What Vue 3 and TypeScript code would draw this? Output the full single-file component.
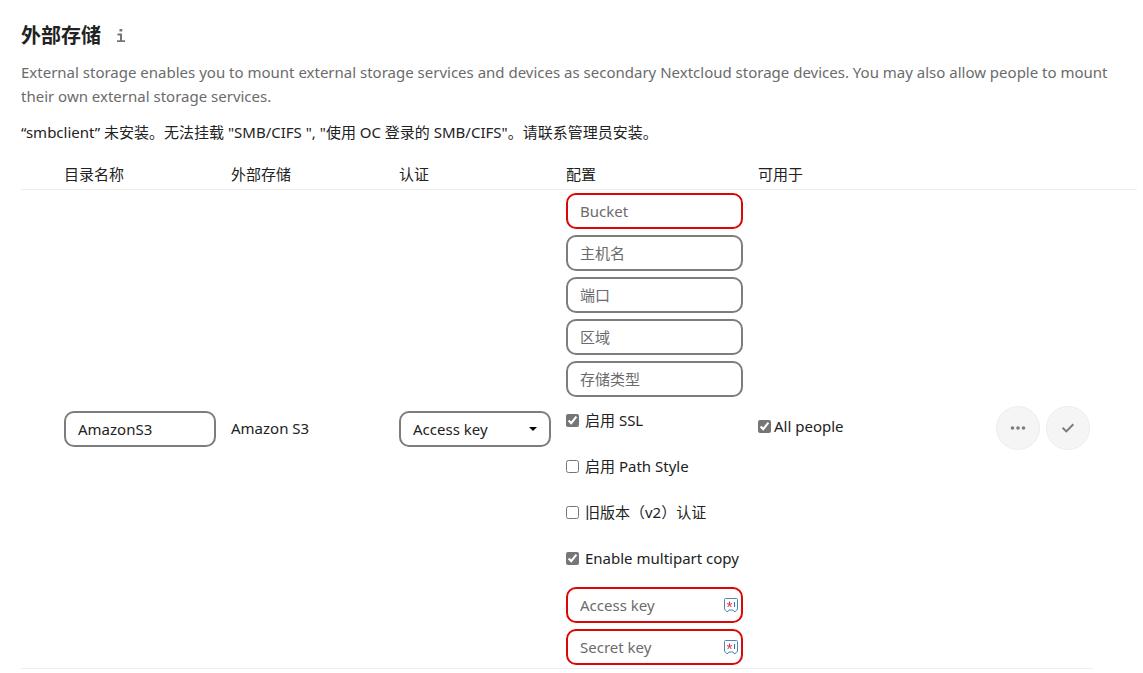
<script setup lang="ts">
import { reactive, ref } from 'vue'

interface Field {
  id: string
  label: string
  required?: boolean
}

interface Option {
  id: string
  label: string
  checked: boolean
}

const headings: string[] = ['目录名称', '外部存储', '认证', '配置', '可用于']

const textFields: Field[] = [
  { id: 'bucket', label: 'Bucket', required: true },
  { id: 'hostname', label: '主机名' },
  { id: 'port', label: '端口' },
  { id: 'region', label: '区域' },
  { id: 'storage-class', label: '存储类型' },
]

const options = reactive<Option[]>([
  { id: 'use-ssl', label: '启用 SSL', checked: true },
  { id: 'path-style', label: '启用 Path Style', checked: false },
  { id: 'legacy-auth', label: '旧版本（v2）认证', checked: false },
  { id: 'multipart', label: 'Enable multipart copy', checked: true },
])

const keyFields: Field[] = [
  { id: 'access-key', label: 'Access key' },
  { id: 'secret-key', label: 'Secret key' },
]

const folderName = ref('AmazonS3')
const authMethod = ref('Access key')
const allPeople = ref(true)
const values = reactive<Record<string, string>>({})
</script>

<template>
  <main class="section">
    <header class="title">
      <h2>外部存储</h2>
      <a href="#" class="info" aria-label="Info">
        <svg viewBox="0 0 16 16" width="16" height="16" aria-hidden="true">
          <path d="M6.500 1h2.800v2.600H6.500zM4.500 5.600h4.500v6.600h3V14H4v-1.800h3V7.400H4.500z" />
        </svg>
      </a>
    </header>
    <p class="hint">
      External storage enables you to mount external storage services and devices as secondary Nextcloud storage
      devices. You may also allow people to mount their own external storage services.
    </p>
    <p class="warning">“smbclient” 未安装。无法挂载 "SMB/CIFS ", "使用 OC 登录的 SMB/CIFS"。请联系管理员安装。</p>

    <table class="storages">
      <colgroup>
        <col class="c-status" />
        <col class="c-name" />
        <col class="c-backend" />
        <col class="c-auth" />
        <col class="c-config" />
        <col />
        <col class="c-actions" />
        <col class="c-end" />
      </colgroup>
      <thead>
        <tr>
          <th></th>
          <th v-for="h in headings" :key="h" scope="col">{{ h }}</th>
          <th></th>
          <th></th>
        </tr>
      </thead>
      <tbody>
        <tr>
          <td></td>
          <td>
            <input v-model="folderName" class="field" type="text" aria-label="目录名称" />
          </td>
          <td class="backend">Amazon S3</td>
          <td>
            <div class="select">
              <select v-model="authMethod" class="field" aria-label="认证">
                <option>Access key</option>
              </select>
              <svg class="caret" viewBox="0 0 8 4" width="8" height="4" aria-hidden="true">
                <path d="M0 0h8L4 4z" />
              </svg>
            </div>
          </td>
          <td>
            <div class="config">
              <input
                v-for="f in textFields"
                :key="f.id"
                v-model="values[f.id]"
                class="field"
                :class="{ invalid: f.required }"
                type="text"
                :placeholder="f.label"
                :aria-label="f.label"
              />
              <div class="options">
                <label v-for="o in options" :key="o.id" class="option" :for="o.id">
                  <input :id="o.id" v-model="o.checked" type="checkbox" />
                  <span>{{ o.label }}</span>
                </label>
              </div>
              <div v-for="f in keyFields" :key="f.id" class="key">
                <input
                  v-model="values[f.id]"
                  class="field invalid"
                  type="text"
                  :placeholder="f.label"
                  :aria-label="f.label"
                />
                <svg class="vault" viewBox="0 0 14 14" width="14" height="14" aria-hidden="true">
                  <path
                    class="safe"
                    d="M1.500.5h11a1 1 0 0 1 1 1v9.500a1 1 0 0 1-1 1l-1 1.500h-1.500l-1-1.500h-4l-1 1.500h-1.500l-1-1.500a1 1 0 0 1-1-1v-9.500a1 1 0 0 1 1-1z"
                  />
                  <path class="star" d="M5.500 3.500v3M5.500 6.500l-2.500-1M5.500 6.500l2.500-1M5.500 6.500l-1.800 2.500M5.500 6.500l1.800 2.500" />
                  <path class="handle" d="M10.500 4v5" />
                </svg>
              </div>
            </div>
          </td>
          <td>
            <label class="people" for="all-people">
              <input id="all-people" v-model="allPeople" type="checkbox" />
              <span>All people</span>
            </label>
          </td>
          <td>
            <div class="actions">
              <button type="button" aria-label="More">
                <svg viewBox="0 0 16 16" width="16" height="16" aria-hidden="true">
                  <circle cx="2.500" cy="8" r="1.800" />
                  <circle cx="8" cy="8" r="1.800" />
                  <circle cx="13.500" cy="8" r="1.800" />
                </svg>
              </button>
              <button type="button" aria-label="Save">
                <svg viewBox="0 0 16 16" width="16" height="16" aria-hidden="true">
                  <path class="tick" d="M2.600 7.800l3.700 3.600 7-7.200" />
                </svg>
              </button>
            </div>
          </td>
        </tr>
      </tbody>
    </table>
  </main>
</template>

<style>
body {
  margin: 0;
  background: #fff;
}
</style>

<style scoped>
.section,
.field {
  font-family: 'Noto Sans', 'Noto Sans CJK SC', sans-serif;
  font-size: 15px;
  color: #222;
}

.section {
  padding: 24px 6px 0 21px;
  line-height: 24px;
}

.title {
  display: flex;
  align-items: center;
  gap: 12px;
  margin-bottom: 12px;
}

h2 {
  margin: 0;
  font-size: 20px;
  font-weight: 700;
  line-height: 24px;
}

.info {
  display: flex;
  fill: #767676;
}

p {
  margin: 0 0 12px;
}

.hint {
  color: #6b6b6b;
}

.storages {
  width: 100%;
  table-layout: fixed;
  border-collapse: separate;
  border-spacing: 0;
}

.c-status {
  width: 36px;
}

.c-name {
  width: 167px;
}

.c-backend {
  width: 168px;
}

.c-auth {
  width: 167px;
}

.c-config {
  width: 192px;
}

.c-actions {
  width: 104px;
}

.c-end {
  width: 44px;
}

th,
td {
  padding: 0 8px 0 7px;
  text-align: left;
  font-weight: 400;
  vertical-align: middle;
  border-bottom: 1px solid #ededed;
}

th {
  padding-top: 6px;
  padding-bottom: 3px;
}

.backend {
  padding-bottom: 2px;
}

.field {
  display: block;
  box-sizing: border-box;
  width: 100%;
  height: 36px;
  margin: 3px 0;
  padding: 0 12px;
  border: 2px solid #7d7d7d;
  border-radius: 10px;
  background: #fff;
  outline: none;
}

.field::placeholder {
  color: #6b6b6b;
  opacity: 1;
}

.field.invalid {
  border-color: #db0606;
}

.config {
  display: flex;
  flex-direction: column;
  gap: 6px;
  padding: 3px 0;
}

.config .field {
  margin: 0;
}

.options {
  margin: -3px 0;
}

.option {
  display: flex;
  align-items: center;
  gap: 6px;
  height: 46px;
  padding-bottom: 6px;
  box-sizing: border-box;
  white-space: nowrap;
}

input[type='checkbox'] {
  flex: none;
  width: 13px;
  height: 13px;
  margin: 0;
  accent-color: #767676;
}

.people {
  display: flex;
  align-items: center;
  gap: 3px;
  padding-bottom: 6px;
}

.select,
.key {
  position: relative;
}

.select .field {
  appearance: none;
}

.caret {
  position: absolute;
  right: 14px;
  top: 16px;
  fill: #000;
  pointer-events: none;
}

.vault {
  position: absolute;
  right: 5px;
  top: 11px;
  fill: none;
}

.safe {
  stroke: #4b87bd;
}

.star {
  stroke: #e3263c;
}

.handle {
  stroke: #2f6fae;
}

.actions {
  display: flex;
  gap: 6px;
  padding-bottom: 2px;
}

button {
  display: flex;
  flex: none;
  align-items: center;
  justify-content: center;
  width: 44px;
  height: 44px;
  padding: 0;
  border: 1px solid #ededed;
  border-radius: 50%;
  background: #f5f5f5;
  fill: #7c7c7c;
}

.tick {
  fill: none;
  stroke: #7c7c7c;
  stroke-width: 2;
}
</style>
